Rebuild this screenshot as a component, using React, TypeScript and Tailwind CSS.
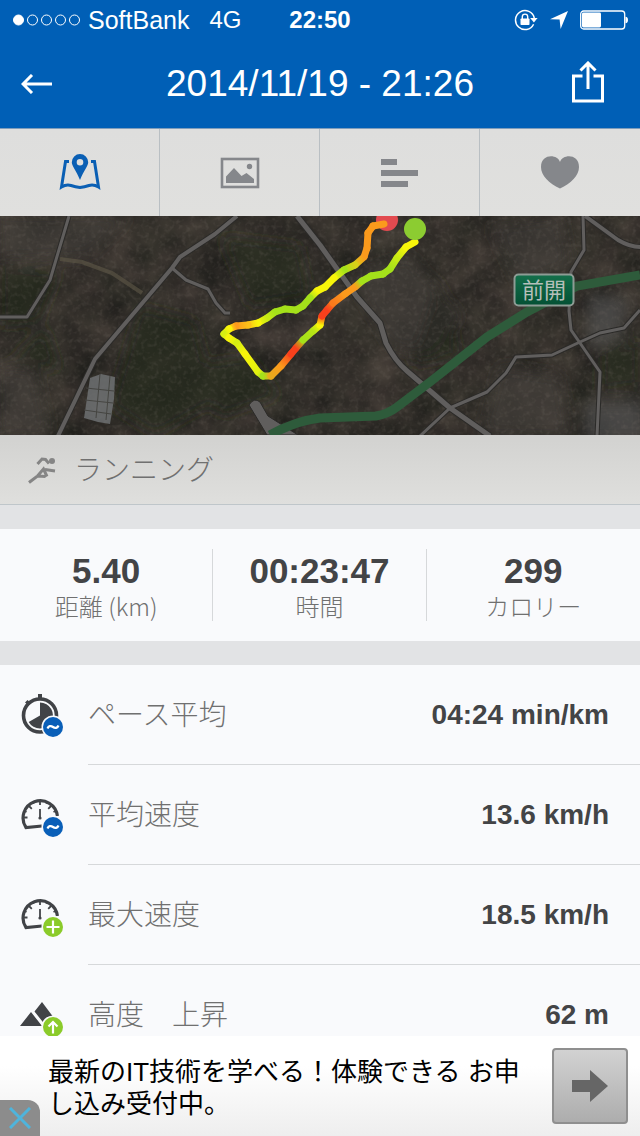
import type { ReactNode } from "react";

const latin = "font-['Liberation_Sans','Noto_Sans_CJK_JP',sans-serif]";
const japanese = "font-['Noto_Sans_CJK_JP',sans-serif] font-light";

function StatusBar() {
  return (
    <div className="grid h-10 grid-cols-[1fr_auto_1fr] items-center px-3 text-[25px] leading-10">
      <div className="flex items-center gap-2">
        <svg width="68" height="14" viewBox="0 0 68 14" fill="none" stroke="#fff" aria-hidden="true">
          <circle cx="6.5" cy="7" r="5" fill="#fff" />
          <circle cx="20.5" cy="7" r="5" />
          <circle cx="34.5" cy="7" r="5" />
          <circle cx="48.5" cy="7" r="5" />
          <circle cx="62.5" cy="7" r="5" />
        </svg>
        <span>SoftBank</span>
        <span className="ml-3 text-2xl leading-10">4G</span>
      </div>
      <span className="text-2xl leading-10 font-bold">22:50</span>
      <div className="flex items-center justify-end gap-3">
        <svg width="24" height="22" viewBox="0 0 24 22" fill="none" aria-hidden="true">
          <path d="M19.6 15.2A9.5 9.5 0 1 1 20.3 9" stroke="#fff" strokeWidth="1.5" />
          <path d="M16.2 9h7.4l-3.7 4.4z" fill="#fff" />
          <rect x="6.5" y="9.5" width="9" height="6.5" rx="0.8" fill="#fff" />
          <path d="M8.3 10V7.8a2.7 2.7 0 0 1 5.4 0V10" stroke="#fff" strokeWidth="1.4" />
        </svg>
        <svg width="18" height="18" viewBox="0 0 18 18" fill="#fff" aria-hidden="true">
          <path d="M18 0 10.6 18 9.6 8.6 0 8.2z" />
        </svg>
        <svg width="48" height="20" viewBox="0 0 48 20" fill="none" aria-hidden="true">
          <rect x="0.7" y="1" width="44" height="18" rx="3" stroke="#fff" strokeWidth="1.3" />
          <rect x="2" y="2.6" width="19" height="14.8" rx="1.4" fill="#fff" />
          <path d="M45.500 6.8c1.800 0 2.500 1.400 2.500 3.200s-.7 3.200-2.500 3.200z" fill="#fff" />
        </svg>
      </div>
    </div>
  );
}

function TitleBar() {
  return (
    <div className="grid h-22 grid-cols-[72px_1fr_72px] items-center">
      <button type="button" aria-label="戻る" className="flex h-full items-center justify-center">
        <svg width="31" height="20" viewBox="0 0 31 20" fill="none" stroke="#fff" strokeWidth="3" aria-hidden="true">
          <path d="M2 10h29M11 1 2 10l9 9" />
        </svg>
      </button>
      <h1 className="text-center text-[37px] leading-[44px]">2014/11/19 - 21:26</h1>
      <button type="button" aria-label="共有" className="flex h-full items-center justify-end pr-9 pb-1">
        <svg width="32" height="42" viewBox="0 0 32 42" fill="none" stroke="#fff" strokeWidth="3" className="shrink-0" aria-hidden="true">
          <path d="M10.5 15H1.500v25h29V15h-9M16 28V3M8.5 9.5 16 2l7.500 7.500" />
        </svg>
      </button>
    </div>
  );
}

const tabs: { name: string; icon: ReactNode }[] = [
  {
    name: "地図",
    icon: (
      <svg width="42" height="38" viewBox="0 0 42 38" aria-hidden="true">
        <path
          d="M10 7.500H6.500L2.500 33q5-3 9.500-1.500T21 33.500q4.500-.5 9-2T39.500 33l-4-25.500H32"
          fill="none"
          stroke="#0a5fb4"
          strokeWidth="3"
        />
        <path
          fillRule="evenodd"
          fill="#0a5fb4"
          d="M21 0a8.200 8.200 0 0 1 8.200 8.200c0 4-4.500 8-8.200 17.800-3.700-9.800-8.200-13.800-8.200-17.800A8.200 8.200 0 0 1 21 0zm0 5a3.300 3.300 0 1 0 0 6.600A3.300 3.300 0 0 0 21 5z"
        />
      </svg>
    ),
  },
  {
    name: "写真",
    icon: (
      <svg width="40" height="32" viewBox="0 0 40 32" aria-hidden="true">
        <rect x="2" y="2" width="36" height="28" fill="none" stroke="#85878b" strokeWidth="2.600" />
        <path fill="#85878b" d="M6 26v-6.500l8-8.500 7.500 8 5-3 7.500 6v4z" />
        <circle cx="29.500" cy="9.500" r="2.700" fill="#85878b" />
      </svg>
    ),
  },
  {
    name: "統計",
    icon: (
      <svg width="38" height="30" viewBox="0 0 38 30" fill="#85878b" aria-hidden="true">
        <path d="M0 1h16v6H0zM0 12h37v6H0zM0 23h27v6H0z" />
      </svg>
    ),
  },
  {
    name: "心拍",
    icon: (
      <svg width="38" height="34" viewBox="0 0 38 34" fill="#85878b" aria-hidden="true">
        <path d="M19 6C16.500-2 0-2.500 0 11c0 8.500 8 16.500 19 21.500 11-5 19-13 19-21.500C38-2.500 21.500-2 19 6z" />
      </svg>
    ),
  },
];

function Tabs() {
  return (
    <nav className="grid h-22 shrink-0 grid-cols-4 border-t border-[#7f9dbb] bg-linear-to-b from-[#dededd] to-[#e0e0de]">
      {tabs.map((tab) => (
        <button
          key={tab.name}
          type="button"
          aria-label={tab.name}
          className="flex items-center justify-center border-r border-[#b9bfc3] last:border-r-0"
        >
          {tab.icon}
        </button>
      ))}
    </nav>
  );
}

const lime = "#a4e11a";
const yellow = "#f8f50a";
const orange = "#fb9a1c";
const red = "#f8401c";

const track: [number, number, string][] = [
  [384, 8, orange], [373, 10, orange], [368, 17, orange], [367, 32, orange], [364, 41, orange],
  [355, 49, "#d8d018"], [344, 54, lime], [334, 62, yellow], [325, 71, yellow], [317, 75, yellow],
  [310, 82, lime], [303, 90, lime], [296, 94, lime], [285, 93, lime], [275, 96, lime],
  [267, 102, "#c6e915"], [258, 107, yellow], [248, 109, "#fbc018"], [236, 110, orange], [229, 113, yellow],
  [224, 118, "#d6ee12"], [229, 122, yellow], [237, 127, "#d6ee12"], [245, 138, yellow], [258, 156, "#e2f010"],
  [263, 160, lime], [271, 160, "#e8a91c"], [281, 150, orange], [291, 138, red], [296, 132, red],
  [303, 124, lime], [313, 115, "#b6e416"], [320, 109, yellow], [322, 100, red], [327, 94, red],
  [333, 87, "#fb7a1c"], [345, 78, orange], [355, 71, orange], [362, 65, lime], [371, 60, lime],
  [383, 58, lime], [390, 53, lime], [397, 42, "#c6e915"], [406, 31, yellow], [415, 26, yellow],
];

function Track() {
  const segments = track.slice(1).map((end, i) => ({ start: track[i], end, id: `seg${i}` }));
  return (
    <g strokeWidth="7" strokeLinecap="round">
      <defs>
        {segments.map(({ start, end, id }) => (
          <linearGradient key={id} id={id} gradientUnits="userSpaceOnUse" x1={start[0]} y1={start[1]} x2={end[0]} y2={end[1]}>
            <stop stopColor={start[2]} />
            <stop offset="1" stopColor={end[2]} />
          </linearGradient>
        ))}
      </defs>
      {segments.map(({ start, end, id }) => (
        <path key={id} d={`M${start[0]} ${start[1]}L${end[0]} ${end[1] + (start[1] === end[1] ? 0.01 : 0)}`} stroke={`url(#${id})`} />
      ))}
    </g>
  );
}

const roads = [
  { d: "M69 0 50 64 27 101H0", width: 3 },
  { d: "M237 0 215 18 180 41 172 52 95 143 58 220", width: 4 },
  { d: "M172 52 186 64 208 73 216 87 225 97H230", width: 3 },
  { d: "M297 0 320 29 357 81 380 107 386 127Q395 145 407 155L450 192 490 220", width: 5 },
  { d: "M583 0 584 34 571 56 569 95 571 114 600 156 597 220", width: 3 },
  { d: "M585 0 618 24Q630 31 640 31", width: 4 },
  { d: "M420 220 450 192 487 176 506 157 516 141 552 139 580 126 600 117 624 112 640 94", width: 3 },
];

function RouteMap() {
  return (
    <svg viewBox="0 0 640 219" className="block h-auto w-full shrink-0" role="img" aria-label="ルート">
      <defs>
        <filter id="terrain" x="0" y="0" width="100%" height="100%" colorInterpolationFilters="sRGB">
          <feTurbulence type="fractalNoise" baseFrequency="0.03" numOctaves="5" seed="11" />
          <feColorMatrix values="0.2 0 0 0 0.1  0.17 0.02 0 0 0.09  0.15 0 0 0 0.09  0 0 0 0 1" />
        </filter>
        <filter id="grain" x="0" y="0" width="100%" height="100%" colorInterpolationFilters="sRGB">
          <feTurbulence type="fractalNoise" baseFrequency="0.22" numOctaves="2" seed="5" />
          <feColorMatrix values="0 0 0 0 0.46  0 0 0 0 0.43  0 0 0 0 0.4  1.5 0 0 0 -0.72" />
        </filter>
        <filter id="soft" x="-20%" y="-20%" width="140%" height="140%">
          <feGaussianBlur stdDeviation="7" />
        </filter>
        <linearGradient id="sign" x2="0" y2="1">
          <stop stopColor="#14704b" />
          <stop offset="1" stopColor="#045034" />
        </linearGradient>
      </defs>
      <rect width="640" height="219" fill="#35322d" />
      <rect width="640" height="219" filter="url(#terrain)" />
      <g filter="url(#soft)">
        <path fill="#46413c" opacity=".6" d="M0 0h130L90 40 0 45zM0 150l35 5 15 64H0zM350 60l60-20 50 60-30 40-40-10zM490 10l70-10 10 50-50 20zM500 150l60 10 10 59h-90z" />
        <path fill="#25271f" opacity=".7" d="M0 50l60 5-20 50-40 5zM45 110l15 45-50-10zM140 90l55 15 20 80-60 34-45-30zM220 20l80 10 10 50-60 10zM190 150l60-10 30 40-60 20zM440 60l20 80-50 10zM600 135l40-10v45l-40 5z" />
        <path fill="#504f50" opacity=".7" d="M585 185h60v40h-60zM588 78l40 5-8 40-32 10z" />
      </g>
      <rect width="640" height="219" filter="url(#grain)" opacity=".4" />
      <path d="M60 43 82 46 112 57 142 77" fill="none" stroke="#5f5848" strokeWidth="4" opacity=".6" />
      <g opacity=".8">
        <path fill="#727577" d="M90 162l11-4 14 3-1 22-4 25-12-2-14-4z" />
        <path stroke="#494a47" d="M86 172l28 3M85 184l28 3M84 194l27 4M100 158l-4 44M110 160l-4 44" />
      </g>
      <g fill="none" strokeLinejoin="round">
        {roads.map((road) => (
          <path key={road.d} d={road.d} stroke="#2b2a28" strokeWidth={road.width + 2} />
        ))}
        {roads.map((road) => (
          <path key={road.d} d={road.d} stroke="#605e5d" strokeWidth={road.width} />
        ))}
      </g>
      <path fill="#605e5d" stroke="#2b2a28" d="M249 189q5-8 11-3l8 14 30 19h-31z" />
      <path
        d="M270 219 Q295 205 320 202L376 200Q388 198 397 191L430 166 487 121 527 96 577 70 640 59"
        fill="none"
        stroke="#2e5b3b"
        strokeWidth="9"
      />
      <circle cx="387" cy="4" r="11" fill="#e24a4f" />
      <Track />
      <circle cx="415" cy="13" r="11" fill="#8ccc31" />
      <rect x="514.500" y="58.500" width="59" height="31" rx="4" fill="url(#sign)" stroke="#8d9c95" strokeWidth="2" />
      <text x="544" y="82" textAnchor="middle" fontSize="22" fill="#b5bfba" fontFamily="'Noto Sans CJK JP', sans-serif">
        前開
      </text>
    </svg>
  );
}

function Activity() {
  return (
    <section className="flex h-[70px] shrink-0 items-center gap-4 border-b border-[#bfc6ca] bg-linear-to-b from-[#d2d2d0] to-[#dfdfdd] pl-7">
      <svg width="30" height="28" viewBox="0 0 30 28" fill="none" stroke="#858585" strokeWidth="3" aria-hidden="true">
        <path d="M9.500 8 14 3 17.500 3.500 21 7.500" />
        <path d="M1 26.500 9.500 20l8 .5M9.500 20l6-7 3.500 7.500M17 13.500l10 1.500" />
        <circle cx="24" cy="5" r="3" fill="#858585" stroke="none" />
      </svg>
      <h2 className={`${japanese} pb-1 text-[28px] leading-10 text-[#707070]`}>ランニング</h2>
    </section>
  );
}

const totals = [
  { value: "5.40", label: "距離 (km)" },
  { value: "00:23:47", label: "時間" },
  { value: "299", label: "カロリー" },
];

function Totals() {
  return (
    <dl className="my-6 grid h-28 shrink-0 grid-cols-3 bg-[#f9fafc] py-5">
      {totals.map((total) => (
        <div
          key={total.label}
          className="flex flex-col-reverse items-center justify-center border-r border-[#d6d8da] pt-0.5 last:border-r-0"
        >
          <dt className={`${japanese} text-2xl leading-[30px] text-[#707070]`}>{total.label}</dt>
          <dd className="text-[35px] leading-10 font-bold text-[#434446]">{total.value}</dd>
        </div>
      ))}
    </dl>
  );
}

function Badge({ color, children }: { color: string; children: ReactNode }) {
  return (
    <>
      <circle cx="33" cy="34" r="11.500" fill="#f9fafc" />
      <circle cx="33" cy="34" r="10" fill={color} />
      <g fill="none" stroke="#fff" strokeWidth="2.200">
        {children}
      </g>
    </>
  );
}

function Gauge() {
  return (
    <g fill="none" stroke="#414347">
      <path d="M22 33 6 34.500A17.200 17.200 0 1 1 37.400 23" strokeWidth="3.200" />
      <path
        strokeWidth="1.800"
        d="M20 7v5M8.500 12.500l3.300 3.300M31.500 12.500l-3.300 3.300M3 24.500h4.500M12.800 8.500l1 2.200M27.200 8.500l-1 2.200M4.500 18l2 1M35.500 18l-2 1"
      />
      <path strokeWidth="1.800" d="M20 16v9" />
      <circle cx="20" cy="25" r="1.600" fill="#414347" stroke="none" />
    </g>
  );
}

function Icon({ children }: { children: ReactNode }) {
  return (
    <svg width="44" height="44" viewBox="0 0 44 44" className="shrink-0" aria-hidden="true">
      {children}
    </svg>
  );
}

const wave = <path d="M27.500 35.500c1-2.500 3.200-3.200 5.500-1.500s4.500 1 5.500-1.500" />;

const metrics: { label: string; value: string; icon: ReactNode }[] = [
  {
    label: "ペース平均",
    value: "04:24 min/km",
    icon: (
      <Icon>
        <circle cx="20" cy="22.500" r="16.500" fill="none" stroke="#414347" strokeWidth="3.600" />
        <path fill="#414347" d="M18 1h4v5h-4zM5 9.500 7.500 7l3.500 3-2.500 2.500zM20 22.500v-13a13 13 0 1 1-11.300 19.500z" />
        <Badge color="#0a5fb8">{wave}</Badge>
      </Icon>
    ),
  },
  {
    label: "平均速度",
    value: "13.6 km/h",
    icon: (
      <Icon>
        <Gauge />
        <Badge color="#0a5fb8">{wave}</Badge>
      </Icon>
    ),
  },
  {
    label: "最大速度",
    value: "18.5 km/h",
    icon: (
      <Icon>
        <Gauge />
        <Badge color="#8bcb2a">
          <path d="M33 27.500v13M26.500 34h13" />
        </Badge>
      </Icon>
    ),
  },
  {
    label: "高度　上昇",
    value: "62 m",
    icon: (
      <Icon>
        <path fill="#414347" d="M0 33 11 19l11 14zM22 9l-7.500 9.500L26 33h14z" />
        <Badge color="#8bcb2a">
          <path d="M33 40.500v-11M28.500 33.500l4.500-4.500 4.500 4.500" />
        </Badge>
      </Icon>
    ),
  },
];

function Metrics() {
  return (
    <dl className="shrink-0 bg-[#f9fafc] pl-5">
      {metrics.map((metric) => (
        <div key={metric.label} className="flex h-25 items-center gap-6">
          {metric.icon}
          <div className="flex h-full flex-1 items-center justify-between border-b border-[#d6d8da] pr-[31px]">
            <dt className={`${japanese} pb-1 text-[28px] leading-10 text-[#707070]`}>{metric.label}</dt>
            <dd className="text-[28px] leading-10 font-bold text-[#434446]">{metric.value}</dd>
          </div>
        </div>
      ))}
    </dl>
  );
}

function Advert() {
  return (
    <aside className="relative flex shrink-0 items-center gap-6 bg-linear-to-b from-white from-30% to-[#eeeeee] py-3 pr-3 pl-12">
      <p className="flex-1 pt-1 text-[26px] leading-8 text-black">最新のIT技術を学べる！体験できる お申し込み受付中。</p>
      <a
        href="#offer"
        aria-label="詳細"
        className="flex size-19 shrink-0 items-center justify-center rounded border-2 border-[#8f8f8f] bg-linear-to-b from-[#d2d2d2] to-[#adadad]"
      >
        <svg width="36" height="32" viewBox="0 0 36 32" fill="#666" aria-hidden="true">
          <path d="M0 10h18V0l18 16-18 16V22H0z" />
        </svg>
      </a>
      <button
        type="button"
        aria-label="閉じる"
        className="absolute bottom-0 left-0 flex h-9 w-10 items-center justify-center rounded-tr-xl bg-[#8c8c8c]"
      >
        <svg width="22" height="22" viewBox="0 0 22 22" stroke="#4fb4dc" strokeWidth="3" aria-hidden="true">
          <path d="M1 1l20 20M21 1 1 21" />
        </svg>
      </button>
    </aside>
  );
}

export default function App() {
  return (
    <div className={`${latin} flex h-screen flex-col bg-[#e2e3e5]`}>
      <header className="shrink-0 bg-[#005fb6] text-white">
        <StatusBar />
        <TitleBar />
      </header>
      <Tabs />
      <main className="flex min-h-0 flex-1 flex-col overflow-hidden">
        <RouteMap />
        <Activity />
        <Totals />
        <Metrics />
      </main>
      <Advert />
    </div>
  );
}
